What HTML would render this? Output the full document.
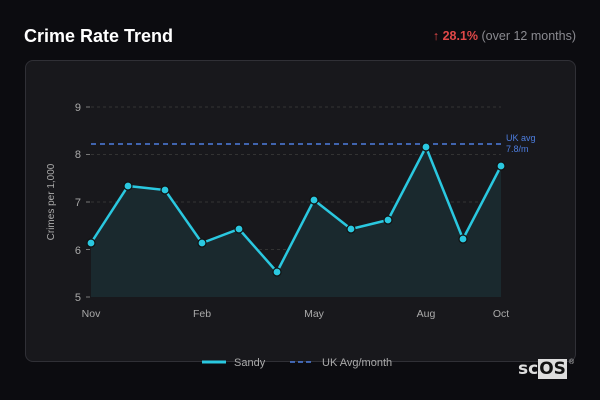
<!DOCTYPE html>
<html><head><style>
body{margin:0;width:600px;height:400px;background:#0c0c10;font-family:"Liberation Sans","DejaVu Sans",sans-serif;overflow:hidden;position:relative}
.t{position:absolute;left:24px;top:26px;color:#fff;font-weight:bold;font-size:18px;font-family:"Liberation Sans",sans-serif}
.c{position:absolute;right:24px;top:29px;font-size:12.5px;color:#8a8a90}
.c b{color:#e04848}
.card{position:absolute;left:25px;top:60px;width:549px;height:300px;background:#18181c;border:1px solid #303036;border-radius:8px}
svg{position:absolute;left:0;top:0}
.logo{position:absolute;left:518px;top:359px;font-size:17px;font-weight:bold;color:#ddd;font-family:"DejaVu Sans",sans-serif}
.logo span{background:#ddd;color:#111;padding:0 1px}
</style></head><body>
<div class="t">Crime Rate Trend</div>
<div class="c"><b>↑ 28.1%</b> (over 12 months)</div>
<div class="card"></div>
<svg width="600" height="400" font-family="Liberation Sans, DejaVu Sans, sans-serif">
<g stroke="#333" stroke-dasharray="3,3" stroke-width="1">
<line x1="91" y1="107" x2="501" y2="107"/><line x1="91" y1="154.5" x2="501" y2="154.5"/><line x1="91" y1="202" x2="501" y2="202"/><line x1="91" y1="249.5" x2="501" y2="249.5"/>
</g>
<g stroke="#777"><line x1="86" y1="107" x2="90" y2="107"/><line x1="86" y1="154.5" x2="90" y2="154.5"/><line x1="86" y1="202" x2="90" y2="202"/><line x1="86" y1="249.5" x2="90" y2="249.5"/><line x1="86" y1="297" x2="90" y2="297"/></g>
<g fill="#aaa" font-size="11" text-anchor="end"><text x="81" y="111">9</text><text x="81" y="158">8</text><text x="81" y="206">7</text><text x="81" y="254">6</text><text x="81" y="301">5</text></g>
<text transform="translate(54,202) rotate(-90)" fill="#aaa" font-size="10" text-anchor="middle">Crimes per 1,000</text>
<g fill="#aaa" font-size="10.5" text-anchor="middle"><text x="91" y="317">Nov</text><text x="202" y="317">Feb</text><text x="314" y="317">May</text><text x="426" y="317">Aug</text><text x="501" y="317">Oct</text></g>
<polygon fill="#1a292e" points="91,297 91,243 128,186 165,190 202,243 239,229 277,272 314,200 351,229 388,220 426,147 463,239 501,166 501,297"/>
<line x1="91" y1="144" x2="501" y2="144" stroke="#4d7ee0" stroke-width="1.5" stroke-dasharray="5,4"/>
<g fill="#4d7ee0" font-size="9"><text x="506" y="141">UK avg</text><text x="506" y="152">7.8/m</text></g>
<polyline fill="none" stroke="#2ac8e0" stroke-width="2.5" points="91,243 128,186 165,190 202,243 239,229 277,272 314,200 351,229 388,220 426,147 463,239 501,166"/>
<g fill="#2ac8e0" stroke="#111" stroke-width="1.2">
<circle cx="91" cy="243" r="4"/><circle cx="128" cy="186" r="4"/><circle cx="165" cy="190" r="4"/><circle cx="202" cy="243" r="4"/><circle cx="239" cy="229" r="4"/><circle cx="277" cy="272" r="4"/><circle cx="314" cy="200" r="4"/><circle cx="351" cy="229" r="4"/><circle cx="388" cy="220" r="4"/><circle cx="426" cy="147" r="4"/><circle cx="463" cy="239" r="4"/><circle cx="501" cy="166" r="4"/>
</g>
<line x1="202" y1="362" x2="226" y2="362" stroke="#2ac8e0" stroke-width="3"/>
<text x="234" y="366" fill="#aaa" font-size="11">Sandy</text>
<line x1="290" y1="362" x2="314" y2="362" stroke="#4d7ee0" stroke-width="1.5" stroke-dasharray="5,3"/>
<text x="322" y="366" fill="#aaa" font-size="11">UK Avg/month</text>
<text x="569" y="364" fill="#ccc" font-size="7">®</text>
</svg>
<div class="logo">sc<span>OS</span></div>
</body></html>
